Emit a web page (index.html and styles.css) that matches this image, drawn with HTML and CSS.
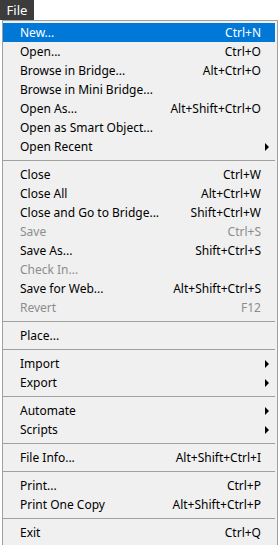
FILE: index.html
```html
<!DOCTYPE html>
<html lang="en">
  <head>
    <meta charset="UTF-8" />
    <title>File menu</title>
    <link rel="stylesheet" href="styles.css">
  </head>
  <body>
    <div class="menubar">
      <span class="menu-title">File</span>
    </div>
    <ul class="menu">
      <li class="item active"><span>New...</span><span class="key">Ctrl+N</span></li>
      <li class="item"><span>Open...</span><span class="key">Ctrl+O</span></li>
      <li class="item"><span>Browse in Bridge...</span><span class="key">Alt+Ctrl+O</span></li>
      <li class="item"><span>Browse in Mini Bridge...</span></li>
      <li class="item"><span>Open As...</span><span class="key">Alt+Shift+Ctrl+O</span></li>
      <li class="item"><span>Open as Smart Object...</span></li>
      <li class="item sub"><span>Open Recent</span></li>
      <li class="sep"></li>
      <li class="item"><span>Close</span><span class="key">Ctrl+W</span></li>
      <li class="item"><span>Close All</span><span class="key">Alt+Ctrl+W</span></li>
      <li class="item"><span>Close and Go to Bridge...</span><span class="key">Shift+Ctrl+W</span></li>
      <li class="item disabled"><span>Save</span><span class="key">Ctrl+S</span></li>
      <li class="item"><span>Save As...</span><span class="key">Shift+Ctrl+S</span></li>
      <li class="item disabled"><span>Check In...</span></li>
      <li class="item"><span>Save for Web...</span><span class="key">Alt+Shift+Ctrl+S</span></li>
      <li class="item disabled"><span>Revert</span><span class="key">F12</span></li>
      <li class="sep"></li>
      <li class="item"><span>Place...</span></li>
      <li class="sep"></li>
      <li class="item sub"><span>Import</span></li>
      <li class="item sub"><span>Export</span></li>
      <li class="sep"></li>
      <li class="item sub"><span>Automate</span></li>
      <li class="item sub"><span>Scripts</span></li>
      <li class="sep"></li>
      <li class="item"><span>File Info...</span><span class="key">Alt+Shift+Ctrl+I</span></li>
      <li class="sep"></li>
      <li class="item"><span>Print...</span><span class="key">Ctrl+P</span></li>
      <li class="item"><span>Print One Copy</span><span class="key">Alt+Shift+Ctrl+P</span></li>
      <li class="sep"></li>
      <li class="item"><span>Exit</span><span class="key">Ctrl+Q</span></li>
    </ul>
  </body>
</html>
```

FILE: styles.css
```css
body,
html {
  margin: 0;
  padding: 0;
  background-color: #ffffff;
  font-family: "Noto Sans", "Open Sans", sans-serif;
  font-size: 12px;
}
.menubar {
  height: 20px;
  display: flex;
}
.menu-title {
  width: 34px;
  height: 20px;
  background-color: #3c3c3c;
  color: #ffffff;
  font-size: 13px;
  line-height: 20px;
  text-align: center;
}
.menu {
  list-style: none;
  margin: 0 0 0 2px;
  padding: 2px 2px 3px 0;
  width: 272px;
  background-color: #f0f0f0;
  border: 1px solid #a0a0a0;
  border-bottom: none;
}
.item {
  display: flex;
  justify-content: space-between;
  align-items: center;
  height: 19px;
  padding: 0 14px 0 17px;
  color: #000000;
  position: relative;
}
.item.active {
  background-color: #0078d7;
  color: #ffffff;
}
.item.disabled {
  color: #8d8d8d;
}
.item.sub::after {
  content: "";
  position: absolute;
  right: 6px;
  top: 6px;
  border-left: 4px solid #000000;
  border-top: 4px solid transparent;
  border-bottom: 4px solid transparent;
}
.sep {
  height: 1px;
  margin: 4px 0 4px 0;
  background-color: #a0a0a0;
}
```
